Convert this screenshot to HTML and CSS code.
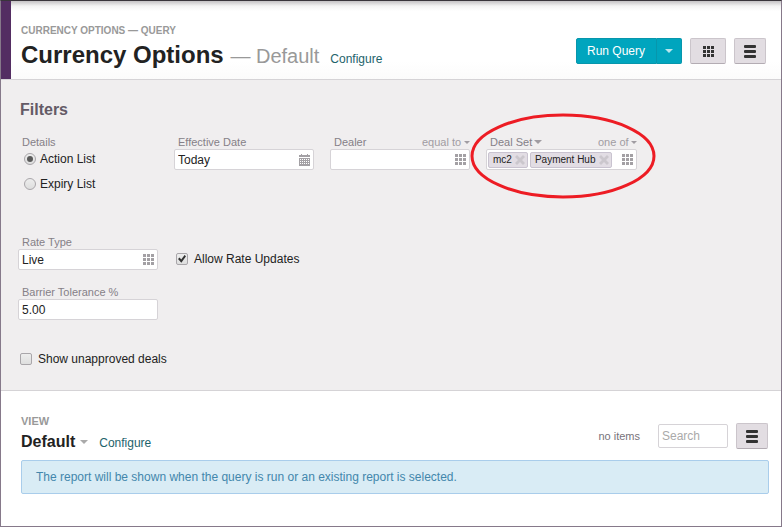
FILE: index.html
```html
<!DOCTYPE html>
<html lang="en">
<head>
<meta charset="utf-8">
<title>Currency Options</title>
<link rel="stylesheet" href="styles.css">
</head>
<body>
<svg class="defs" aria-hidden="true">
  <symbol id="grid" viewBox="0 0 11 11"><path d="M0 0h3v3H0zM4 0h3v3H4zM8 0h3v3H8zM0 4h3v3H0zM4 4h3v3H4zM8 4h3v3H8zM0 8h3v3H0zM4 8h3v3H4zM8 8h3v3H8z"/></symbol>
  <symbol id="menu" viewBox="0 0 12 13"><rect width="12" height="3" rx="1"/><rect y="5" width="12" height="3" rx="1"/><rect y="10" width="12" height="3" rx="1"/></symbol>
  <symbol id="calendar" viewBox="0 0 11 12"><path fill-rule="evenodd" d="M0 1h2V0h1v1h5V0h1v1h2v2H0zM0 4h11v8H0zM1 5v1h1V5zM3 5v1h1V5zM5 5v1h1V5zM7 5v1h1V5zM9 5v1h1V5zM1 7v1h1V7zM3 7v1h1V7zM5 7v1h1V7zM7 7v1h1V7zM9 7v1h1V7zM1 9v1h1V9zM3 9v1h1V9zM5 9v1h1V9zM7 9v1h1V9zM9 9v1h1V9z"/></symbol>
  <symbol id="cross" viewBox="0 0 10 10"><path d="M2 0l3 3 3-3 2 2-3 3 3 3-2 2-3-3-3 3-2-2 3-3-3-3z"/></symbol>
</svg>
<div class="window">
  <header class="header">
    <div>
      <p class="eyebrow eyebrow-small">CURRENCY OPTIONS — QUERY</p>
      <div class="title-row">
        <h1 class="title">Currency Options <span class="title-sub">— Default</span></h1>
        <a class="link" href="#">Configure</a>
      </div>
    </div>
    <div class="actions">
      <div class="split">
        <button class="btn-primary" type="button">Run Query</button>
        <button class="btn-primary btn-more" type="button" aria-label="More run options"><span class="caret"></span></button>
      </div>
      <button class="btn btn-wide" type="button" aria-label="Grid"><svg class="icon-grid"><use href="#grid"/></svg></button>
      <button class="btn" type="button" aria-label="Menu"><svg class="icon-menu"><use href="#menu"/></svg></button>
    </div>
  </header>

  <form class="filters">
    <h2 class="filters-title">Filters</h2>
    <div class="fields">
      <fieldset class="field details">
        <legend class="label">Details</legend>
        <label class="option"><input class="radio" type="radio" name="details" checked>Action List</label>
        <label class="option"><input class="radio" type="radio" name="details">Expiry List</label>
      </fieldset>
      <div class="field">
        <label class="label" for="date">Effective Date</label>
        <div class="control">
          <input class="input" id="date" type="text" value="Today">
          <button class="picker" type="button" aria-label="Pick a date"><svg class="icon-calendar"><use href="#calendar"/></svg></button>
        </div>
      </div>
      <div class="field">
        <div class="label-row">
          <label class="label" for="dealer">Dealer</label>
          <span class="operator"><select class="operator-select" aria-label="Dealer operator"><option>equal to</option></select><span class="caret caret-small"></span></span>
        </div>
        <div class="control">
          <input class="input" id="dealer" type="text">
          <button class="picker" type="button" aria-label="Pick a dealer"><svg class="icon-grid"><use href="#grid"/></svg></button>
        </div>
      </div>
      <div class="field deal-set">
        <div class="label-row">
          <button class="label label-button" type="button">Deal Set<span class="caret"></span></button>
          <span class="operator"><select class="operator-select" aria-label="Deal set operator"><option>one of</option></select><span class="caret caret-small"></span></span>
        </div>
        <div class="control">
          <div class="tags">
            <span class="tag">mc2<button class="tag-remove" type="button" aria-label="Remove mc2"><svg class="icon-cross"><use href="#cross"/></svg></button></span>
            <span class="tag">Payment Hub<button class="tag-remove" type="button" aria-label="Remove Payment Hub"><svg class="icon-cross"><use href="#cross"/></svg></button></span>
          </div>
          <button class="picker" type="button" aria-label="Pick a deal set"><svg class="icon-grid"><use href="#grid"/></svg></button>
        </div>
        <svg class="highlight" viewBox="0 0 187 86" aria-hidden="true"><ellipse cx="93" cy="43" rx="91" ry="41"/></svg>
      </div>

      <div class="field">
        <label class="label" for="rate">Rate Type</label>
        <div class="control">
          <input class="input" id="rate" type="text" value="Live">
          <button class="picker" type="button" aria-label="Pick a rate type"><svg class="icon-grid"><use href="#grid"/></svg></button>
        </div>
      </div>
      <label class="option updates"><input class="check" type="checkbox" checked>Allow Rate Updates</label>

      <div class="field tolerance">
        <label class="label" for="tolerance">Barrier Tolerance %</label>
        <div class="control"><input class="input" id="tolerance" type="text" value="5.00"></div>
      </div>
    </div>
    <label class="option unapproved"><input class="check" type="checkbox">Show unapproved deals</label>
  </form>

  <main class="view">
    <div class="view-bar">
      <div>
        <p class="eyebrow">VIEW</p>
        <div class="view-row">
          <button class="view-name" type="button">Default<span class="caret"></span></button>
          <a class="link" href="#">Configure</a>
        </div>
      </div>
      <div class="view-tools">
        <span class="count">no items</span>
        <input class="search" type="search" placeholder="Search" aria-label="Search">
        <button class="btn" type="button" aria-label="View menu"><svg class="icon-menu"><use href="#menu"/></svg></button>
      </div>
    </div>
    <p class="notice">The report will be shown when the query is run or an existing report is selected.</p>
  </main>
</div>
</body>
</html>
```
FILE: styles.css
```css
* { box-sizing: border-box; }

body {
  margin: 0;
  font: 12px/16px "Liberation Sans", Arial, sans-serif;
  color: #222;
  background: #fff;
}

h1, h2, p, fieldset, legend { margin: 0; padding: 0; border: 0; }

button, input, select {
  margin: 0;
  padding: 0;
  border: 0;
  background: none;
  font: inherit;
  color: inherit;
  border-radius: 0;
}

svg { display: block; }
.defs { position: absolute; width: 0; height: 0; }

.window {
  display: flex;
  flex-direction: column;
  min-height: 100vh;
  border: 1px solid #86798a;
  border-top-color: #39353b;
}

/* Header */
.header {
  display: flex;
  justify-content: space-between;
  align-items: flex-start;
  padding: 23px 15px 9px 10px;
  border-left: 10px solid #532d62;
  box-shadow: 0 1px #d5d3d6;
  margin-bottom: 1px;
  background: linear-gradient(#c4c2c4, #f3f3f3 5px, #fff 10px, #fff 60px, #fbfbfb);
}

.eyebrow {
  font-size: 11px;
  line-height: 14px;
  font-weight: bold;
  color: #999;
}

.eyebrow-small { font-size: 10px; }

.title-row { display: flex; align-items: baseline; gap: 11px; margin-top: 3px; }
.title { font-size: 24px; line-height: 28px; }
.title-sub { font-size: 20px; font-weight: normal; color: #999; }
.link { color: #1d636b; text-decoration: none; }

.actions { display: flex; gap: 8px; padding-top: 14px; }
.split { display: flex; }

.btn-primary {
  height: 26px;
  padding: 0 11px 0 10px;
  border: 1px solid #0796ac;
  border-radius: 2px 0 0 2px;
  background: #00a5be;
  color: #fff;
}

.btn-more {
  display: grid;
  place-items: center;
  width: 25px;
  padding: 0;
  border-left: 0;
  border-radius: 0 2px 2px 0;
  color: #b8e6ed;
}

.btn {
  display: grid;
  place-items: center;
  width: 32px;
  height: 26px;
  border: 1px solid #cbc5cb;
  border-bottom-color: #b3acb3;
  border-radius: 2px;
  background: #e2dde2;
  color: #333;
}

.btn-wide { width: 36px; }

.icon-grid { width: 11px; height: 11px; fill: currentColor; }
.icon-menu { width: 12px; height: 13px; fill: currentColor; }
.icon-calendar { width: 11px; height: 12px; fill: currentColor; }
.icon-cross { width: 10px; height: 10px; fill: currentColor; }

.caret {
  display: inline-block;
  border: 4px solid transparent;
  border-top-color: currentColor;
  border-bottom: 0;
}

.caret-small { border-width: 3px 3px 0; }

/* Filters */
.filters {
  padding: 20px 17px 23px;
  border-bottom: 1px solid #d5d3d6;
  background: #f0eeef;
}

.filters-title {
  padding-left: 2px;
  font-size: 16px;
  line-height: 20px;
  color: #645a66;
}

.fields {
  display: grid;
  grid-template-columns: repeat(3, 140px) 151px;
  grid-template-rows: 85px auto auto;
  gap: 15px 16px;
  margin-top: 15px;
}

.field { position: relative; min-width: 0; }
.label-row { display: flex; justify-content: space-between; }

.label {
  display: block;
  padding-left: 4px;
  font-size: 11px;
  line-height: 14px;
  color: #858087;
}

.label-button { display: flex; align-items: center; gap: 2px; }
.label-button .caret { color: #a09ca2; }

.operator {
  display: flex;
  align-items: center;
  gap: 2px;
  font-size: 11px;
  line-height: 14px;
  color: #a09ca2;
}

.operator-select { appearance: none; height: 14px; }

.control {
  display: flex;
  align-items: center;
  height: 21px;
  padding-right: 3px;
  border: 1px solid #d6d3d7;
  border-radius: 2px;
  background: #fff;
}

.input { flex: 1; min-width: 0; padding-left: 3px; height: 19px; }
.picker { color: #a3a0a4; }

.tags { display: flex; flex: 1; gap: 2px; padding-left: 1px; }

.tag {
  display: flex;
  align-items: center;
  gap: 3px;
  height: 16px;
  padding: 0 2px 0 4px;
  border: 1px solid #c9c3d0;
  border-radius: 2px;
  background: #e2dde4;
  font-size: 10px;
  line-height: 14px;
}

.tag-remove { color: #cbc7cd; }

.option { display: flex; align-items: center; gap: 4px; }
.details .option { height: 25px; padding-left: 6px; }
.details .label { margin-bottom: -3px; }
.updates { align-self: start; gap: 6px; height: 20px; margin-top: 14px; padding-left: 2px; }
.tolerance { grid-column: 1; }
.unapproved { gap: 6px; margin-top: 31px; padding-left: 2px; }

.radio, .check {
  appearance: none;
  display: grid;
  place-items: center;
  width: 12px;
  height: 12px;
  border: 1px solid #a9a6aa;
  border-radius: 2px;
  background: linear-gradient(#ededed, #dedede);
}

.radio { border-radius: 50%; }

.radio:checked::before {
  content: "";
  width: 6px;
  height: 6px;
  border-radius: 50%;
  background: #5a5a5a;
}

.check:checked::before {
  content: "";
  width: 8px;
  height: 8px;
  background: #333;
  clip-path: polygon(0 50%, 20% 32%, 40% 55%, 82% 0, 100% 16%, 42% 96%);
}

.highlight {
  position: absolute;
  left: -16px;
  top: -22px;
  width: 187px;
  height: 86px;
  fill: none;
  stroke: #ed1c24;
  stroke-width: 3;
  pointer-events: none;
}

/* View */
.view { padding: 23px 12px 28px 20px; }
.view-bar { display: flex; justify-content: space-between; align-items: flex-end; }
.view-row { display: flex; align-items: baseline; gap: 11px; margin-top: 4px; }

.view-name {
  display: flex;
  align-items: center;
  gap: 5px;
  font-size: 16px;
  line-height: 20px;
  font-weight: bold;
}

.view-name .caret { color: #aaa; }
.view-tools { display: flex; align-items: center; gap: 8px; padding: 0 1px 3px 0; }
.count { margin-right: 10px; font-size: 11px; color: #77727a; }

.search {
  appearance: none;
  width: 70px;
  height: 24px;
  padding: 0 3px;
  border: 1px solid #d6d3d7;
  border-radius: 2px;
}

.search::placeholder { color: #aaa; }

.notice {
  margin-top: 8px;
  padding: 8px 14px;
  border: 1px solid #a9cdeb;
  border-radius: 2px;
  background: #d9ecf5;
  color: #4387ac;
}
```
